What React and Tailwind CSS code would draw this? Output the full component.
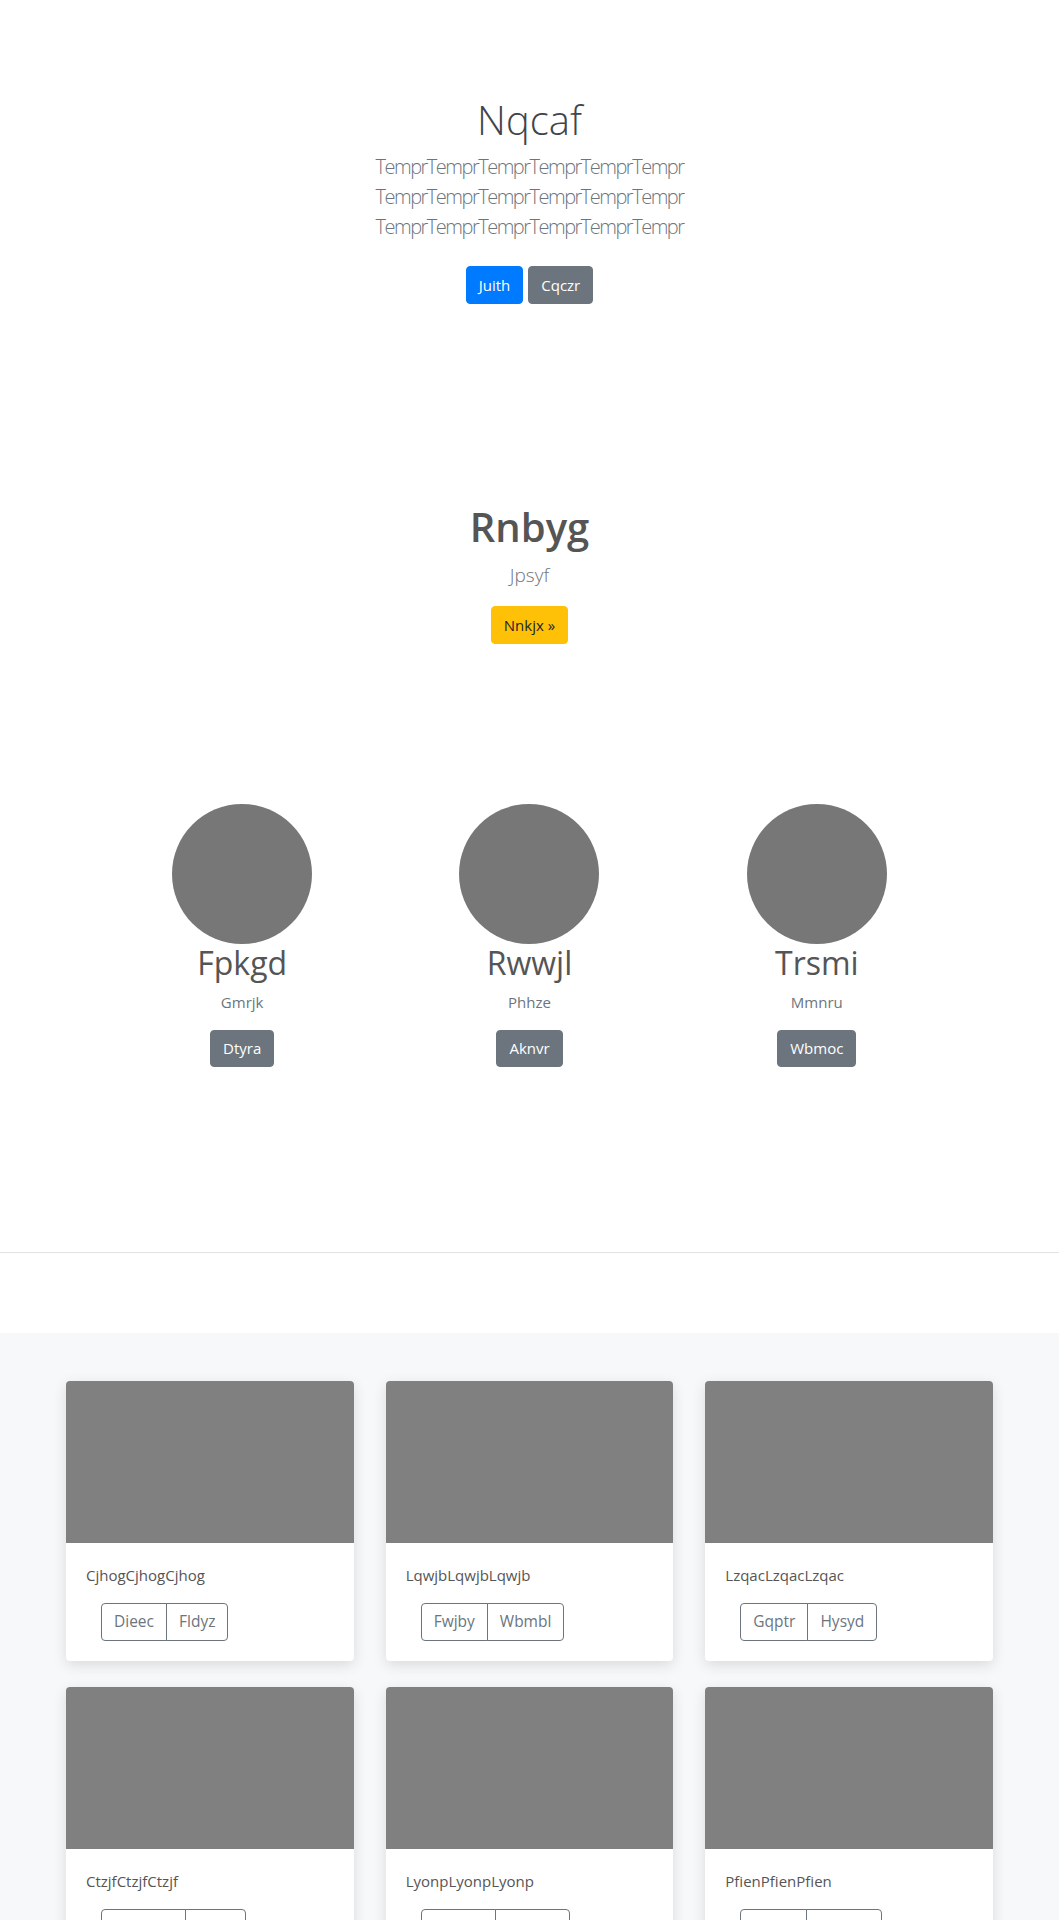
import React from 'react';

const people = [
  { name: 'Fpkgd', role: 'Gmrjk', action: 'Dtyra' },
  { name: 'Rwwjl', role: 'Phhze', action: 'Aknvr' },
  { name: 'Trsmi', role: 'Mmnru', action: 'Wbmoc' },
];

const cards = [
  { text: 'CjhogCjhogCjhog', left: 'Dieec', right: 'Fldyz' },
  { text: 'LqwjbLqwjbLqwjb', left: 'Fwjby', right: 'Wbmbl' },
  { text: 'LzqacLzqacLzqac', left: 'Gqptr', right: 'Hysyd' },
  { text: 'CtzjfCtzjfCtzjf', left: 'Mvzwqk', right: 'Jrtpn' },
  { text: 'LyonpLyonpLyonp', left: 'Bnwxh', right: 'Kdmgv' },
  { text: 'PfienPfienPfien', left: 'Sxqtu', right: 'Vwnhq' },
];

const Card = ({ text, left, right }) => (
  <div className="bg-white rounded-[4px] overflow-hidden shadow-[0_4px_14px_rgba(0,0,0,0.12)]">
    <div className="h-[162px] bg-[#808080]" />
    <div className="p-5">
      <p className="text-[15px] leading-6 text-[#555] mb-4">{text}</p>
      <div className="ml-[15px] inline-flex">
        <button className="px-3 py-[6px] text-[15.5px] leading-[23.5px] text-[#6c757d] border border-[#6c757d] rounded-l-[4px]">
          {left}
        </button>
        <button className="-ml-px px-3 py-[6px] text-[15.5px] leading-[23.5px] text-[#6c757d] border border-[#6c757d] rounded-r-[4px]">
          {right}
        </button>
      </div>
    </div>
  </div>
);

export default function App() {
  return (
    <div className="min-h-screen bg-white font-['Segoe_UI','Open_Sans',sans-serif] text-[#212529]">
      <section className="pt-[96px] text-center">
        <h1 className="text-[40px] font-light leading-[1.2] mb-2 text-[#3f454b]">Nqcaf</h1>
        <p className="max-w-[450px] mx-auto text-[20px] font-light leading-[30px] text-[#6c757d] mb-4 tracking-[-1.5px]">
          TemprTemprTemprTemprTemprTempr TemprTemprTemprTemprTemprTempr TemprTemprTemprTemprTemprTempr
        </p>
        <p className="flex justify-center gap-[5px] py-2">
          <button className="px-3 py-[6px] text-[15px] leading-6 text-white bg-[#007bff] border border-[#007bff] rounded-[4px]">
            Juith
          </button>
          <button className="px-3 py-[6px] text-[15px] leading-6 text-white bg-[#6c757d] border border-[#6c757d] rounded-[4px]">
            Cqczr
          </button>
        </p>
      </section>

      <section className="pt-[190px] text-center">
        <h2 className="text-[40px] font-semibold leading-[1.25] text-[#555] mb-2">Rnbyg</h2>
        <p className="text-[19px] font-light leading-[30px] text-[#6c757d] mb-4">Jpsyf</p>
        <button className="px-3 py-[6px] text-[15px] leading-6 text-[#212529] bg-[#ffc107] border border-[#ffc107] rounded-[4px]">
          Nnkjx »
        </button>
      </section>

      <section className="pt-[160px] pb-[185px]">
        <div className="w-[862px] mx-auto grid grid-cols-3">
          {people.map((p) => (
            <div key={p.name} className="flex flex-col items-center text-center">
              <div className="w-[140px] h-[140px] rounded-full bg-[#777]" />
              <h3 className="text-[32px] leading-[1.2] text-[#555] mb-2">{p.name}</h3>
              <p className="text-[15px] leading-6 text-[#6c757d] mb-4">{p.role}</p>
              <button className="px-3 py-[6px] text-[15px] leading-[23px] text-white bg-[#6c757d] border border-[#6c757d] rounded-[4px]">
                {p.action}
              </button>
            </div>
          ))}
        </div>
      </section>

      <hr className="border-0 border-t border-[#e2e2e2]" />

      <div className="h-[80px]" />

      <section className="bg-[#f7f8fa] pt-12 pb-12">
        <div className="w-[927px] mx-auto grid grid-cols-3 gap-x-8 gap-y-[26px]">
          {cards.map((c) => (
            <Card key={c.text} {...c} />
          ))}
        </div>
      </section>
    </div>
  );
}
